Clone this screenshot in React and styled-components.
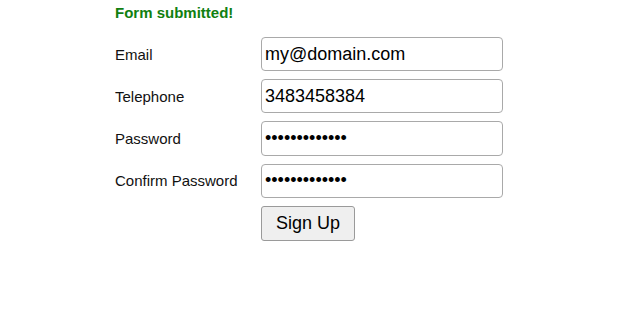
import React from "react";
import styled, { createGlobalStyle } from "styled-components";

const GlobalStyle = createGlobalStyle`
  body {
    margin: 0;
    background: #fff;
    font-family: "Liberation Sans", Arial, sans-serif;
  }
`;

const Page = styled.div`
  padding: 4px 0 0 115px;
`;

const Message = styled.p`
  margin: 0 0 16px;
  font-size: 15px;
  line-height: 17px;
  font-weight: bold;
  color: #108010;
`;

const Form = styled.form`
  display: grid;
  grid-template-columns: 146px 242px;
  grid-template-rows: 34px 34px 34.5px 34.5px auto;
  row-gap: 8px;
  align-items: center;
`;

const Label = styled.label`
  font-size: 15px;
  color: #111;
`;

const Input = styled.input`
  box-sizing: border-box;
  width: 100%;
  height: 100%;
  margin: 0;
  padding: 0 3px;
  border: 1px solid #a9a9a9;
  border-radius: 4px;
  font-family: "Liberation Sans", Arial, sans-serif;
  font-size: 18px;
  color: #000;
  background: #fff;
  outline: none;
`;

const Button = styled.button`
  grid-column: 2;
  justify-self: start;
  box-sizing: border-box;
  height: 35px;
  padding: 0 14px;
  border: 1px solid #9a9a9a;
  border-radius: 3px;
  background: #efefef;
  font-family: "Liberation Sans", Arial, sans-serif;
  font-size: 18px;
  color: #000;
`;

const fields = [
  { id: "email", label: "Email", type: "email", value: "my@domain.com" },
  { id: "tel", label: "Telephone", type: "tel", value: "3483458384" },
  { id: "pw", label: "Password", type: "password", value: "abcdefghijklm" },
  { id: "pw2", label: "Confirm Password", type: "password", value: "abcdefghijklm" },
];

export default function App() {
  return (
    <>
      <GlobalStyle />
      <Page>
        <Message>Form submitted!</Message>
        <Form onSubmit={(e) => e.preventDefault()}>
          {fields.map((f) => (
            <React.Fragment key={f.id}>
              <Label htmlFor={f.id}>{f.label}</Label>
              <Input id={f.id} type={f.type} defaultValue={f.value} />
            </React.Fragment>
          ))}
          <Button type="submit">Sign Up</Button>
        </Form>
      </Page>
    </>
  );
}
